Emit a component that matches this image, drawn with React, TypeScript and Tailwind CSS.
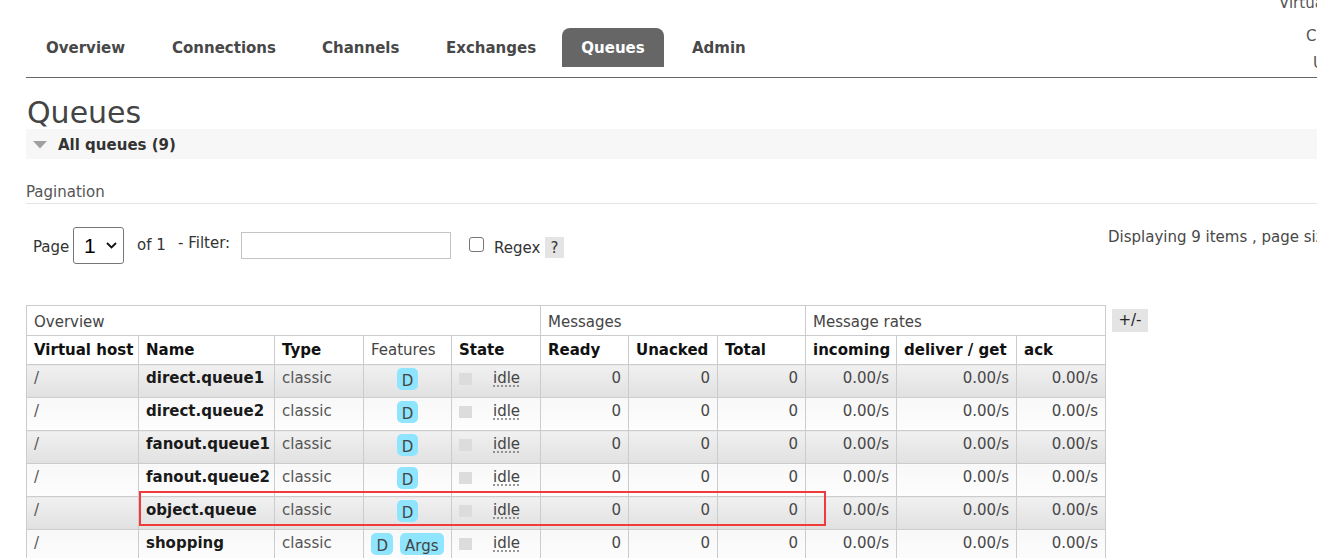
import React from 'react';

const rows = [
  { name: 'direct.queue1', f: ['D'] },
  { name: 'direct.queue2', f: ['D'] },
  { name: 'fanout.queue1', f: ['D'] },
  { name: 'fanout.queue2', f: ['D'] },
  { name: 'object.queue', f: ['D'] },
  { name: 'shopping', f: ['D', 'Args'] },
  { name: 'simple.queue', f: ['D'] },
  { name: 'topic.queue1', f: ['D'] },
  { name: 'topic.queue2', f: ['D'] },
];

const navItems = [
  { label: 'Overview', w: 'w-[126px]' },
  { label: 'Connections', w: 'w-[150px]' },
  { label: 'Channels', w: 'w-[124px]' },
  { label: 'Exchanges', w: 'w-[136px]' },
];

export default function App() {
  return (
    <div className="relative w-[1317px] h-[558px] overflow-hidden bg-white font-['DejaVu_Sans',sans-serif] text-[15px] leading-[18px] text-[#484848]">
      {/* top-right info (cut off at the window edge, as in the reference) */}
      <div className="absolute left-[1279px] top-[-6px] whitespace-nowrap text-[#555]">Virtual host</div>
      <div className="absolute left-[1306px] top-[27px] whitespace-nowrap text-[#555]">Cluster</div>
      <div className="absolute left-[1313px] top-[54px] whitespace-nowrap text-[#555]">User</div>

      {/* nav */}
      <div className="ml-[26px] pt-[28px] pb-[10px] border-b border-[#666]">
        <div className="flex h-[39px] font-bold">
          {navItems.map((n) => (
            <div key={n.label} className={`${n.w} shrink-0 pl-[20px] pt-[11px] whitespace-nowrap`}>
              {n.label}
            </div>
          ))}
          <div className="w-[102px] shrink-0 h-[39px] rounded-t-[8px] bg-[#666] text-white text-center pt-[11px]">
            Queues
          </div>
          <div className="ml-[8px] pl-[20px] pt-[11px]">Admin</div>
        </div>
      </div>

      <div className="ml-[26px]">
        <h1 className="mt-[18px] ml-[1px] text-[30px] leading-[33px] text-[#444]">Queues</h1>
        <div className="h-[30px] bg-[#f7f7f7] flex items-start">
          <svg width="14" height="8" className="ml-[7px] mt-[12px]" viewBox="0 0 14 8">
            <polygon points="0,0 14,0 7,7.5" fill="#a0a0a0" />
          </svg>
          <span className="ml-[11px] pt-[7px] font-bold text-[#333]">All queues (9)</span>
        </div>

        <div className="mt-[24px] pb-[2px] border-b border-[#e4e4e4] text-[#555]">Pagination</div>

        <div className="mt-[23px] h-[37px] flex items-start whitespace-nowrap text-[#333]">
          <span className="ml-[7px] w-[40px] shrink-0 mt-[11px]">Page</span>
          <div className="w-[51px] h-[37px] shrink-0 border border-[#767676] rounded-[3px] flex items-center pl-[10px] bg-white">
            <span className="font-['Liberation_Sans',sans-serif] text-[21px] leading-[24px] text-black">1</span>
            <svg width="11" height="7" viewBox="0 0 11 7" className="ml-[10px]">
              <polyline points="1,1 5.5,5.5 10,1" fill="none" stroke="#111" strokeWidth="1.8" />
            </svg>
          </div>
          <span className="ml-[13px] w-[41px] shrink-0 mt-[9px]">of 1</span>
          <span className="w-[63px] shrink-0 mt-[7px]">- Filter:</span>
          <div className="w-[210px] h-[27px] shrink-0 mt-[5px] border border-[#c4c4c4] bg-white" />
          <div className="ml-[18px] w-[15px] h-[15px] shrink-0 mt-[10px] border border-[#767676] rounded-[3px] bg-white" />
          <span className="ml-[10px] w-[51px] shrink-0 mt-[12px]">Regex</span>
          <div className="w-[19px] h-[21px] shrink-0 mt-[10px] bg-[#e4e4e4] text-center pt-[2px]">?</div>
          <span className="ml-[544px] shrink-0 mt-[1px] text-[#484848]">Displaying 9 items , page size up to: 100</span>
        </div>

        <div className="relative mt-[41px] flex items-start">
          <table className="table-fixed border-collapse w-[1079px] shrink-0">
            <colgroup>
              <col className="w-[112px]" />
              <col className="w-[136px]" />
              <col className="w-[89px]" />
              <col className="w-[88px]" />
              <col className="w-[89px]" />
              <col className="w-[88px]" />
              <col className="w-[89px]" />
              <col className="w-[88px]" />
              <col className="w-[91px]" />
              <col className="w-[120px]" />
              <col className="w-[89px]" />
            </colgroup>
            <thead>
              <tr className="h-[30px]">
                <th colSpan={5} className="border border-[#ccc] px-[7px] pt-[2px] text-left font-normal text-[#444] align-middle">Overview</th>
                <th colSpan={3} className="border border-[#ccc] px-[7px] pt-[2px] text-left font-normal text-[#444] align-middle">Messages</th>
                <th colSpan={3} className="border border-[#ccc] px-[7px] pt-[2px] text-left font-normal text-[#444] align-middle">Message rates</th>
              </tr>
              <tr className="h-[29px] text-[#111]">
                <th className="border border-[#ccc] px-[7px] text-left whitespace-nowrap">Virtual host</th>
                <th className="border border-[#ccc] px-[7px] text-left">Name</th>
                <th className="border border-[#ccc] px-[7px] text-left">Type</th>
                <th className="border border-[#ccc] px-[7px] text-left font-normal text-[#444]">Features</th>
                <th className="border border-[#ccc] px-[7px] text-left">State</th>
                <th className="border border-[#ccc] px-[7px] text-left">Ready</th>
                <th className="border border-[#ccc] px-[7px] text-left">Unacked</th>
                <th className="border border-[#ccc] px-[7px] text-left">Total</th>
                <th className="border border-[#ccc] px-[7px] text-left">incoming</th>
                <th className="border border-[#ccc] px-[7px] text-left whitespace-nowrap">deliver / get</th>
                <th className="border border-[#ccc] px-[7px] text-left">ack</th>
              </tr>
            </thead>
            <tbody>
              {rows.map((r, i) => {
                const bg = i % 2 === 0 ? 'bg-gradient-to-b from-[#f1f1f1] to-[#e1e1e1]' : 'bg-gradient-to-b from-[#f8f8f8] to-[#fdfdfd]';
                const td = `border border-[#ccc] px-[7px] pt-[4px] align-top ${bg}`;
                return (
                  <tr key={r.name} className="h-[33px]">
                    <td className={`${td} text-[#555]`}>/</td>
                    <td className={`${td} font-bold text-[#1a1a1a] whitespace-nowrap`}>{r.name}</td>
                    <td className={`${td} text-[#555]`}>classic</td>
                    <td className={`border border-[#ccc] px-[7px] pt-[3px] align-top ${bg}`}>
                      <div className="flex justify-center gap-[7px]">
                        {r.f.map((f) => (
                          <span key={f} className="h-[22px] pt-[4px] px-[5px] rounded-[5px] bg-[#8fe5fe] text-[#444] leading-[18px]">
                            {f}
                          </span>
                        ))}
                      </div>
                    </td>
                    <td className={`${td}`}>
                      <div className="flex items-start">
                        <div className="w-[13px] h-[12px] mt-[4px] bg-[#dcdcdc] shrink-0" />
                        <span className="ml-[21px] underline decoration-dotted decoration-[#777] underline-offset-[3px] text-[#444]">idle</span>
                      </div>
                    </td>
                    <td className={`${td} text-right`}>0</td>
                    <td className={`${td} text-right`}>0</td>
                    <td className={`${td} text-right`}>0</td>
                    <td className={`${td} text-right`}>0.00/s</td>
                    <td className={`${td} text-right`}>0.00/s</td>
                    <td className={`${td} text-right`}>0.00/s</td>
                  </tr>
                );
              })}
            </tbody>
          </table>
          <div className="ml-[6px] mt-[4px] w-[36px] h-[23px] shrink-0 bg-[#e4e4e4] text-[#222] text-center pt-[2px]">+/-</div>

          {/* red annotation box */}
          <div className="absolute left-[113px] top-[186px] w-[687px] h-[35px] border-2 border-[#ef3b3b] pointer-events-none" />
        </div>
      </div>
    </div>
  );
}
